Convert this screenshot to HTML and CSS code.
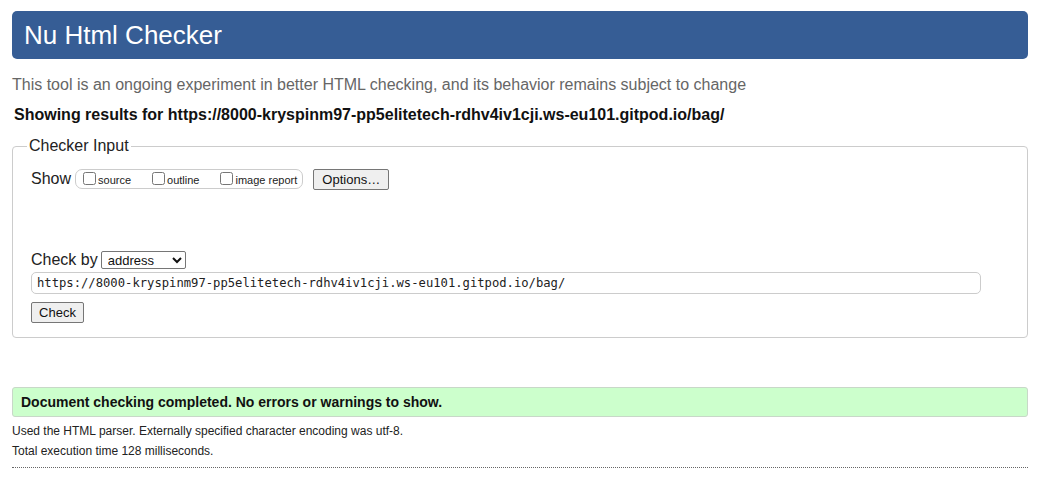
FILE: index.html
```html
<!DOCTYPE html>
<html lang="en">
<head>
<meta charset="utf-8">
<title>Nu Html Checker</title>
<link rel="stylesheet" href="styles.css">
</head>
<body>
<div class="page">
  <header class="masthead"><h1 class="title">Nu Html Checker</h1></header>
  <p class="tagline">This tool is an ongoing experiment in better HTML checking, and its behavior remains subject to change</p>
  <p class="showing">Showing results for https://8000-kryspinm97-pp5elitetech-rdhv4iv1cji.ws-eu101.gitpod.io/bag/</p>
  <fieldset class="input-box">
    <legend class="legend">Checker Input</legend>
    <div class="show-row">
      <span class="label">Show</span>
      <span class="opts">
        <label class="opt"><input type="checkbox" class="cb">source</label>
        <label class="opt"><input type="checkbox" class="cb">outline</label>
        <label class="opt last"><input type="checkbox" class="cb">image report</label>
      </span>
      <button class="btn options">Options…</button>
    </div>
    <div class="checkby-row">
      <span class="label">Check by</span>
      <select class="sel"><option>address</option></select>
    </div>
    <input class="doc-url" type="text" value="https://8000-kryspinm97-pp5elitetech-rdhv4iv1cji.ws-eu101.gitpod.io/bag/">
    <div class="submit-row"><button class="btn check">Check</button></div>
  </fieldset>
  <div class="success">Document checking completed. No errors or warnings to show.</div>
  <p class="details first">Used the HTML parser. Externally specified character encoding was utf-8.</p>
  <p class="details">Total execution time 128 milliseconds.</p>
  <div class="rule"></div>
</div>
</body>
</html>
```
FILE: styles.css
```css
html, body { margin: 0; padding: 0; background: #fff; }
body { font-family: "Liberation Sans", Arial, sans-serif; color: #111; }
.page { padding: 11px 9px 0 12px; width: 1016px; }
.masthead {
  background: #365d95;
  border-radius: 5px;
  height: 48px;
  display: flex;
  align-items: center;
}
.title {
  margin: 0 0 0 12px;
  font-size: 26px;
  font-weight: normal;
  color: #fff;
  line-height: 48px;
}
.tagline {
  margin: 16px 0 0 0;
  font-size: 16px;
  line-height: 20px;
  color: #666;
}
.showing {
  margin: 10px 0 0 2px;
  font-size: 16px;
  line-height: 20px;
  font-weight: bold;
  color: #111;
}
.input-box {
  margin: 11px 0 0 0;
  border: 1px solid #ccc;
  border-radius: 4px;
  padding: 0 18px 14px 18px;
  min-width: 0;
}
.legend {
  font-size: 16px;
  line-height: 20px;
  padding: 0 2px;
  margin-left: -4px;
  color: #222;
}
.show-row {
  display: flex;
  align-items: center;
  height: 22px;
  margin-top: 12px;
}
.label { font-size: 16px; color: #222; }
.opts {
  display: flex;
  align-items: center;
  height: 18px;
  margin-left: 4px;
  border: 1px solid #ccc;
  border-radius: 7px;
  padding: 0 5px 0 4px;
}
.opt {
  display: flex;
  align-items: center;
  font-size: 11px;
  color: #222;
  margin-right: 18px;
  padding-top: 1px;
}
.opt.last { margin-right: 0; }
.cb {
  width: 13px;
  height: 13px;
  margin: 0 2px 2px 3px;
}
.btn {
  font-family: "Liberation Sans", Arial, sans-serif;
  font-size: 13px;
  color: #111;
  background: #efefef;
  border: 1px solid #767676;
  border-radius: 2px;
  padding: 0 6px;
  height: 21px;
}
.options { margin-left: 10px; width: 76px; }
.checkby-row {
  display: flex;
  align-items: center;
  height: 20px;
  margin-top: 60px;
}
.sel {
  margin-left: 3px;
  height: 18px;
  width: 85px;
  font-family: "Liberation Sans", Arial, sans-serif;
  font-size: 13px;
  border: 1px solid #767676;
  border-radius: 2px;
  background: #fff;
  color: #111;
  padding: 0 2px;
}
.doc-url {
  display: block;
  box-sizing: border-box;
  width: 950px;
  height: 22px;
  margin-top: 2px;
  border: 1px solid #ccc;
  border-radius: 5px;
  padding: 0 5px;
  font-family: "DejaVu Sans Mono", "Liberation Mono", monospace;
  font-size: 12.2px;
  color: #222;
}
.submit-row { margin-top: 8px; display: flex; }
.check { width: 53px; height: 21px; padding: 0; }
.success {
  margin-top: 49px;
  background: #ccffcc;
  border: 1px solid #c8d8c8;
  border-radius: 3px;
  height: 28px;
  line-height: 28px;
  padding-left: 8px;
  font-size: 14px;
  font-weight: bold;
  color: #111;
}
.details {
  margin: 6px 0 0 0;
  font-size: 12px;
  line-height: 14px;
  color: #222;
}
.details.first { margin-top: 7px; }
.rule {
  margin-top: 9px;
  border-top: 1px dotted #666;
  height: 0;
}
```
